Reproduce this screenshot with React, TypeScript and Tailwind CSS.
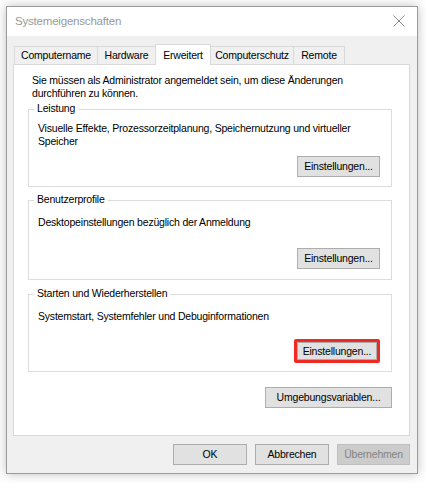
import React from "react";

const font = { fontFamily: '"Liberation Sans", Arial, sans-serif' };

function Btn({ label, w, disabled }: { label: string; w: string; disabled?: boolean }) {
  return (
    <button
      className={`${w} h-[21px] border text-[10.5px] tracking-[-0.2px] leading-none ${
        disabled
          ? "bg-[#cccccc] border-[#bfbfbf] text-[#838383]"
          : "bg-[#e1e1e1] border-[#adadad] text-black"
      }`}
    >
      {label}
    </button>
  );
}

function Group({
  title,
  text,
  h,
  mt,
  pt,
  mb,
  highlight,
}: {
  title: string;
  text: string;
  h: string;
  mt: string;
  pt: string;
  mb: string;
  highlight?: boolean;
}) {
  return (
    <div className={`relative ${mt} ml-[14px] w-[364px] ${h} border border-[#dcdcdc] flex flex-col`}>
      <span className="absolute -top-[8px] left-[5px] bg-white px-[3px] leading-[13px]">{title}</span>
      <p className={`${pt} pl-[9px] pr-[8px] leading-[13px]`}>{text}</p>
      <div className={`mt-auto ${mb} mr-[11px] flex justify-end`}>
        {highlight ? (
          <div className="w-[86px] h-[24px] border-[3px] border-[#ee2a24] rounded-[2px] flex">
            <button className="flex-1 bg-[#e1e1e1] border border-[#adadad] text-[10.5px] tracking-[-0.2px] leading-none">
              Einstellungen...
            </button>
          </div>
        ) : (
          <Btn label="Einstellungen..." w="w-[83px]" />
        )}
      </div>
    </div>
  );
}

export default function App() {
  const tabs = [
    { name: "Computername", w: "w-[84px]" },
    { name: "Hardware", w: "w-[58px]" },
    { name: "Erweitert", w: "w-[56px]", active: true },
    { name: "Computerschutz", w: "w-[83px]" },
    { name: "Remote", w: "w-[51px]" },
  ];

  return (
    <div
      className="min-h-screen bg-white pt-[6px] pl-[6px] text-black text-[10.5px] tracking-[-0.2px]"
      style={font}
    >
      <div className="w-[412px] h-[468px] border border-[#9b9b9b] bg-[#f0f0f0] flex flex-col shadow-[0_0_10px_rgba(0,0,0,0.25)]">
        <div className="h-[29px] bg-white flex items-center justify-between pl-[8px] pr-[12px]">
          <span className="text-[11.5px] tracking-[-0.2px] text-[#999999]">Systemeigenschaften</span>
          <svg width="12" height="12" viewBox="0 0 12 12" className="mb-[1px]">
            <path d="M0.5 0.5 L11.5 11.5 M11.5 0.5 L0.5 11.5" stroke="#8a8a8a" strokeWidth="1" />
          </svg>
        </div>

        <div className="flex flex-col pt-[8px]">
          <div className="flex items-end h-[20px] ml-[7px]">
            {tabs.map((t, i) => (
              <div
                key={t.name}
                className={`${t.w} flex justify-center border-t border-r border-[#d9d9d9] ${
                  i === 0 ? "border-l" : ""
                } ${
                  t.active
                    ? "h-[21px] -mb-px bg-white relative z-10 items-start pt-[3px] -ml-px border-l"
                    : "h-[18px] bg-[#f0f0f0] items-center"
                }`}
              >
                {t.name}
              </div>
            ))}
          </div>

          <div className="ml-[6px] w-[397px] h-[372px] border border-[#d9d9d9] bg-white flex flex-col">
            <p className="pt-[9px] pl-[18px] pr-[20px] leading-[13px]">
              Sie müssen als Administrator angemeldet sein, um diese Änderungen durchführen zu können.
            </p>
            <Group
              title="Leistung"
              text="Visuelle Effekte, Prozessorzeitplanung, Speichernutzung und virtueller Speicher"
              h="h-[78px]"
              mt="mt-[9px]"
              pt="pt-[12px]"
              mb="mb-[9px]"
            />
            <Group
              title="Benutzerprofile"
              text="Desktopeinstellungen bezüglich der Anmeldung"
              h="h-[80px]"
              mt="mt-[13px]"
              pt="pt-[15px]"
              mb="mb-[10px]"
            />
            <Group
              title="Starten und Wiederherstellen"
              text="Systemstart, Systemfehler und Debuginformationen"
              h="h-[78px]"
              mt="mt-[14px]"
              pt="pt-[15px]"
              mb="mb-[8px]"
              highlight
            />
            <div className="flex justify-end mt-[15px] mr-[17px]">
              <Btn label="Umgebungsvariablen..." w="w-[127px]" />
            </div>
          </div>

          <div className="flex justify-end gap-[8px] mt-[8px] mr-[7px]">
            <Btn label="OK" w="w-[74px]" />
            <Btn label="Abbrechen" w="w-[74px]" />
            <Btn label="Übernehmen" w="w-[73px]" disabled />
          </div>
        </div>
      </div>
    </div>
  );
}
